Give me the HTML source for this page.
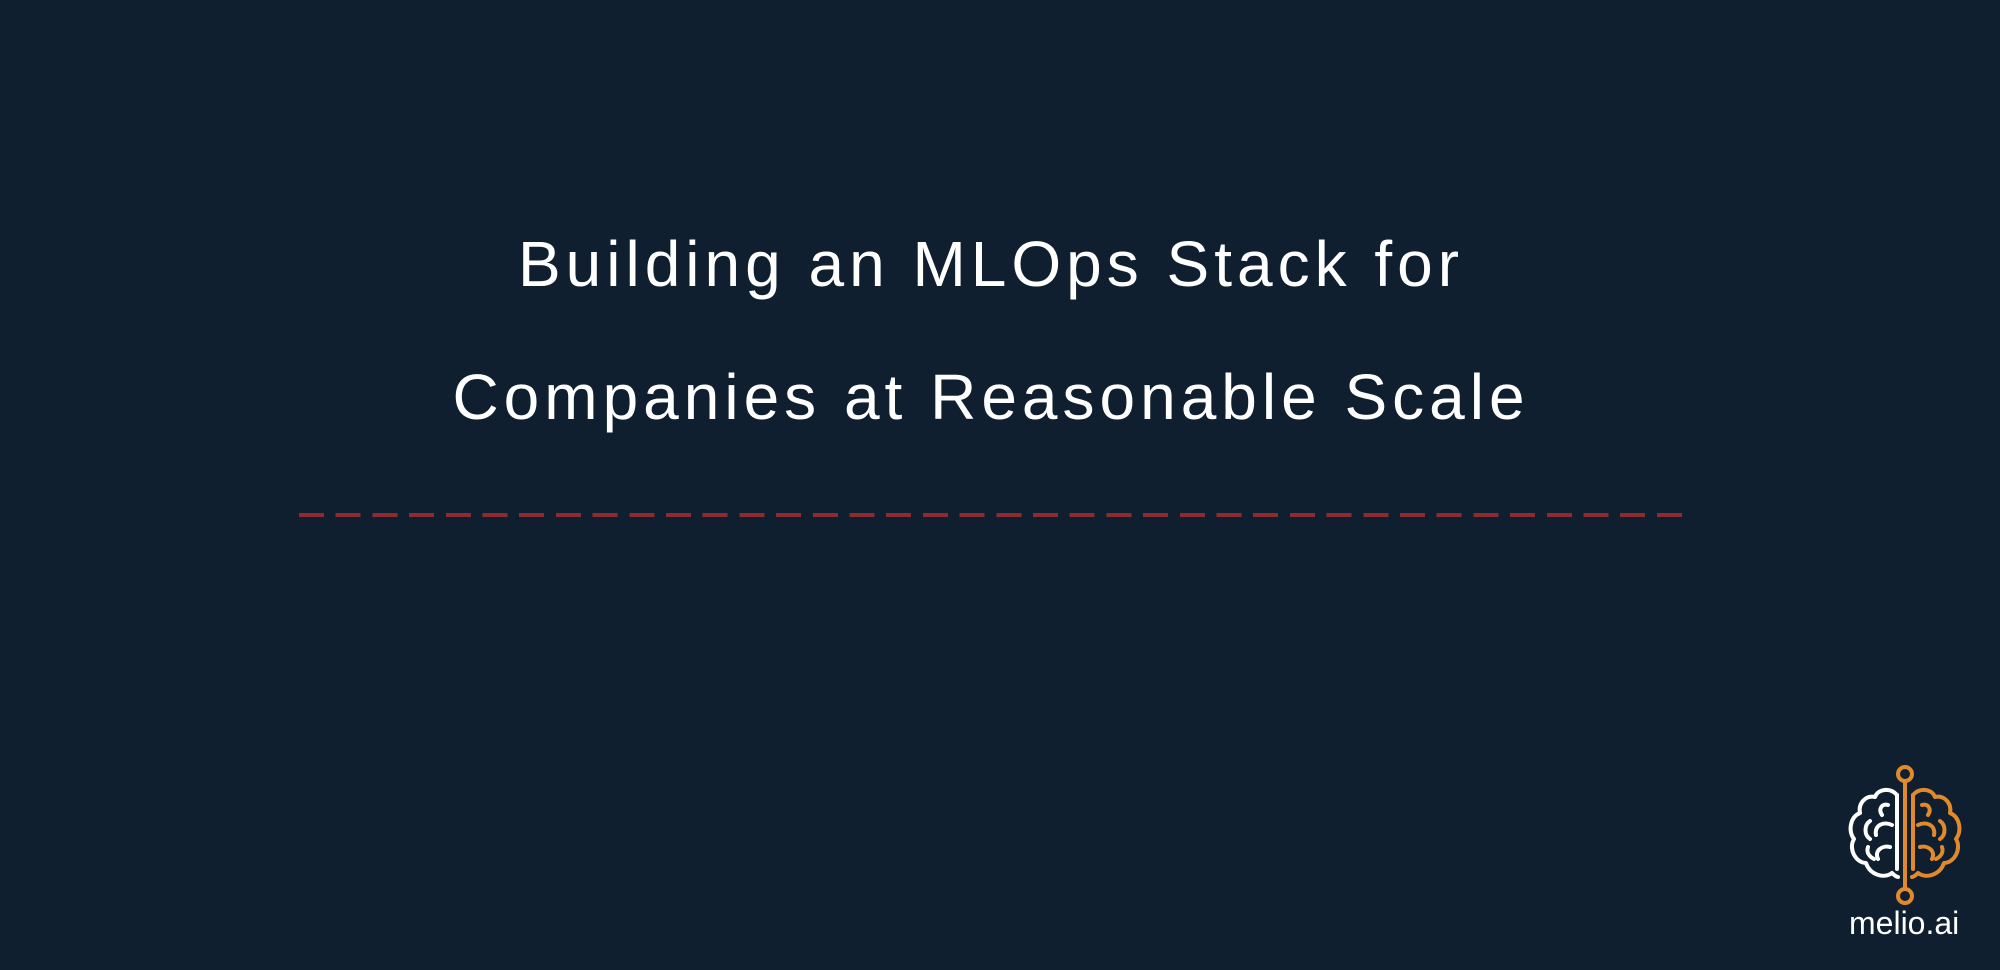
<!DOCTYPE html>
<html><head><meta charset="utf-8"><style>
html,body{margin:0;padding:0}
body{width:2000px;height:970px;background:#101f2f;position:relative;overflow:hidden;font-family:"Liberation Sans",sans-serif;color:#fff}
.t{position:absolute;left:0;width:1982px;text-align:center;font-size:64px;letter-spacing:5px;line-height:1}
.dash{position:absolute;left:299px;top:513px;width:1385px;height:4px;background:repeating-linear-gradient(90deg,#8e2b2e 0 25px,transparent 25px 36.7px)}
.logo{position:absolute;left:1840px;top:765px}
.brand{position:absolute;left:1849px;top:905px;font-size:32px;color:#fff}
</style></head><body>
<div class="t" style="top:232px">Building an MLOps Stack for</div>
<div class="t" style="top:365px">Companies at Reasonable Scale</div>
<div class="dash"></div>
<svg class="logo" width="130" height="140" viewBox="0 0 130 140" fill="none" stroke-width="4" stroke-linecap="round" stroke-linejoin="round">
<g stroke="#e08a2c">
<circle cx="65" cy="9" r="7"/><circle cx="65" cy="131" r="7"/>
<line x1="65" y1="16" x2="65" y2="124"/>
<path d="M73 30 C80 22 92 24 95 32 C104 30 112 38 110 48 C120 52 122 66 116 74 C122 84 114 98 104 98 C100 110 86 114 78 108 C74 112 72 112 72 112"/>
<path d="M73 30 L73 104"/>
<path d="M82 40 C88 38 92 44 88 50"/>
<path d="M78 60 C86 56 96 60 94 70"/>
<path d="M100 56 C106 60 106 70 100 74"/>
<path d="M80 82 C88 80 96 86 92 94"/>
<path d="M102 82 C104 88 100 92 96 94"/>
</g>
<g stroke="#ffffff">
<path d="M57 30 C50 22 38 24 35 32 C26 30 18 38 20 48 C10 52 8 66 14 74 C8 84 16 98 26 98 C30 110 44 114 52 108 C56 112 58 112 58 112"/>
<path d="M57 30 L57 104"/>
<path d="M48 40 C42 38 38 44 42 50"/>
<path d="M52 60 C44 56 34 60 36 70"/>
<path d="M30 56 C24 60 24 70 30 74"/>
<path d="M50 82 C42 80 34 86 38 94"/>
<path d="M28 82 C26 88 30 92 34 94"/>
</g>
</svg>
<div class="brand">melio.ai</div>
</body></html>
